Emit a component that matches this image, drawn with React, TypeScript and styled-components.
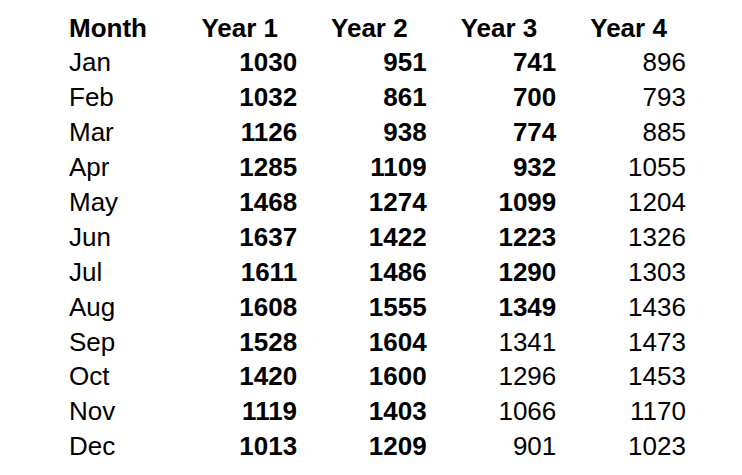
import { Fragment } from "react";
import styled, { createGlobalStyle } from "styled-components";

const GlobalStyle = createGlobalStyle`
  body {
    margin: 0;
    background: #ffffff;
    color: #000000;
    font-family: "Liberation Sans", Arial, sans-serif;
  }
`;

const Wrapper = styled.div`
  padding: 10.5px 0 0 69px;
`;

const Table = styled.div`
  display: grid;
  grid-template-columns: 98.5px repeat(4, 129.6px);
  grid-auto-rows: 34.9px;
  font-size: 26px;
  line-height: 34.9px;
`;

const HeadCell = styled.div<{ $first?: boolean }>`
  font-weight: bold;
  text-align: ${props => (props.$first ? "left" : "right")};
  padding-right: ${props => (props.$first ? "0" : "19px")};
  white-space: nowrap;
`;

const MonthCell = styled.div`
  white-space: nowrap;
`;

const ValueCell = styled.div<{ $bold: boolean }>`
  text-align: right;
  font-weight: ${props => (props.$bold ? "bold" : "normal")};
`;

const years = ["Year 1", "Year 2", "Year 3", "Year 4"];

// the last number of each row says how many leading columns are bold
const rows: [string, number[], number][] = [
  ["Jan", [1030, 951, 741, 896], 3],
  ["Feb", [1032, 861, 700, 793], 3],
  ["Mar", [1126, 938, 774, 885], 3],
  ["Apr", [1285, 1109, 932, 1055], 3],
  ["May", [1468, 1274, 1099, 1204], 3],
  ["Jun", [1637, 1422, 1223, 1326], 3],
  ["Jul", [1611, 1486, 1290, 1303], 3],
  ["Aug", [1608, 1555, 1349, 1436], 3],
  ["Sep", [1528, 1604, 1341, 1473], 2],
  ["Oct", [1420, 1600, 1296, 1453], 2],
  ["Nov", [1119, 1403, 1066, 1170], 2],
  ["Dec", [1013, 1209, 901, 1023], 2],
];

function App() {
  return (
    <>
      <GlobalStyle />
      <Wrapper>
        <Table>
          <HeadCell $first>Month</HeadCell>
          {years.map(y => (
            <HeadCell key={y}>{y}</HeadCell>
          ))}
          {rows.map(([month, values, boldCount]) => (
            <Fragment key={month}>
              <MonthCell>{month}</MonthCell>
              {values.map((v, i) => (
                <ValueCell key={i} $bold={i < boldCount}>
                  {v}
                </ValueCell>
              ))}
            </Fragment>
          ))}
        </Table>
      </Wrapper>
    </>
  );
}

export default App;
